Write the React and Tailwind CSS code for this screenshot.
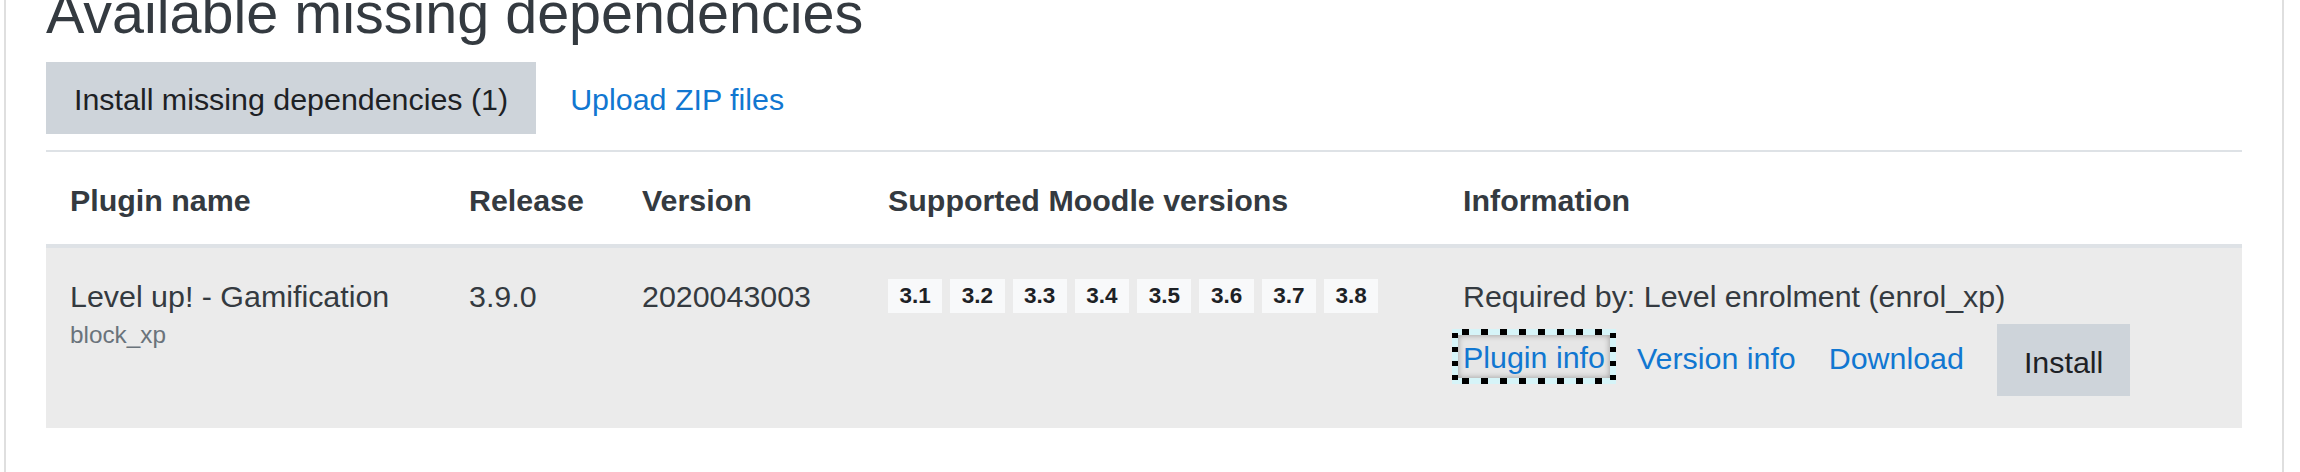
export default function App() {
  const versions = ["3.1", "3.2", "3.3", "3.4", "3.5", "3.6", "3.7", "3.8"];
  return (
    <div className="h-[472px] overflow-hidden bg-white font-['Liberation_Sans',Arial,sans-serif] text-[#343a40]">
      <div className="ml-[4px] h-[472px] w-[2280px] overflow-hidden border-x-2 border-[#dfdfdf] px-[40px]">
        <h2 className="-mt-[21px] mb-[14px] text-[57.5px] font-normal leading-[69px]">
          Available missing dependencies
        </h2>
        <div className="flex items-center">
          <button className="bg-[#ced4da] px-[28px] pb-[12px] pt-[15px] text-[30.4px] leading-[45px] text-[#1d2125]">
            Install missing dependencies (1)
          </button>
          <a className="ml-[34px] pt-[3px] text-[30.4px] leading-[45px] text-[#1177d1]">Upload ZIP files</a>
        </div>
        <table className="mt-[16px] w-full table-fixed border-separate border-spacing-0 text-[30.4px] leading-[45.6px]">
          <colgroup>
            <col className="w-[399px]" />
            <col className="w-[173px]" />
            <col className="w-[246px]" />
            <col className="w-[575px]" />
            <col />
          </colgroup>
          <thead>
            <tr>
              {["Plugin name", "Release", "Version", "Supported Moodle versions", "Information"].map((h) => (
                <th
                  key={h}
                  className="border-t-2 border-b-4 border-[#dee2e6] px-[24px] pb-[20px] pt-[26px] text-left align-bottom font-bold"
                >
                  {h}
                </th>
              ))}
            </tr>
          </thead>
          <tbody>
            <tr className="bg-[#ebebeb]">
              <td className="px-[24px] pb-[20px] pt-[26px] align-top">
                <div>Level up! - Gamification</div>
                <div className="text-[24.3px] leading-[32px] text-[#6a737b]">block_xp</div>
              </td>
              <td className="px-[24px] pb-[20px] pt-[26px] align-top">3.9.0</td>
              <td className="px-[24px] pb-[20px] pt-[26px] align-top">2020043003</td>
              <td className="px-[24px] pb-[20px] pt-[26px] align-top">
                <div className="mt-[5px] flex flex-wrap gap-[8px]">
                  {versions.map((v) => (
                    <span
                      key={v}
                      className="bg-[#f8f9fa] px-[11.5px] text-[22.5px] font-bold leading-[34px] text-[#1d2125]"
                    >
                      {v}
                    </span>
                  ))}
                </div>
              </td>
              <td className="px-[24px] pb-[20px] pt-[26px] align-top">
                <div>Required by: Level enrolment (enrol_xp)</div>
                <div className="mb-[12px] mt-[4.4px] flex items-start">
                  <span className="-ml-[11px] -mr-[12px] mt-[5px] block bg-[image:repeating-linear-gradient(180deg,#d6f4f8_0_4px,#000_4px_9px,#d6f4f8_9px_14px)] px-[6px]">
                    <span className="block bg-[image:repeating-linear-gradient(90deg,#d6f4f8_0_4px,#000_4px_11px,#d6f4f8_11px_19px)] py-[6px]">
                      <a className="block bg-[#e6e6e6] px-[5px] pt-[2px] leading-[41px] text-[#1177d1] shadow-[inset_0_0_6px_rgba(0,0,0,0.35)]">
                        Plugin info
                      </a>
                    </span>
                  </span>
                  <a className="ml-[33px] mt-[12.6px] text-[#1177d1]">Version info</a>
                  <a className="ml-[33px] mt-[12.6px] text-[#1177d1]">Download</a>
                  <button className="ml-[33px] bg-[#ced4da] px-[27px] pb-[11px] pt-[16px] leading-[45px] text-[#1d2125]">
                    Install
                  </button>
                </div>
              </td>
            </tr>
          </tbody>
        </table>
      </div>
    </div>
  );
}
